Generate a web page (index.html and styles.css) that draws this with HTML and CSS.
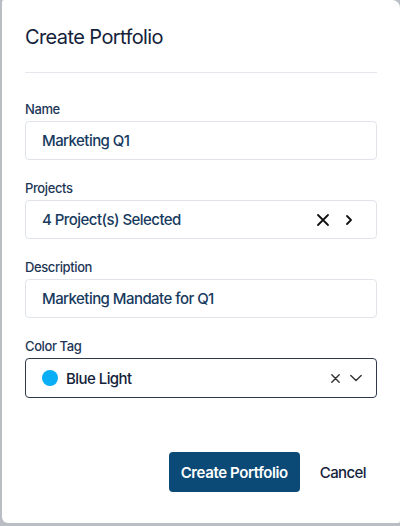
FILE: index.html
```html
<!DOCTYPE html>
<html>
<head>
<meta charset="utf-8">
<link rel="stylesheet" href="styles.css">
</head>
<body>
<div class="dialog">
  <h1 class="title">Create Portfolio</h1>
  <div class="divider"></div>
  <div class="field">
    <label class="label">Name</label>
    <div class="input">Marketing Q1</div>
  </div>
  <div class="field">
    <label class="label">Projects</label>
    <div class="input">
      <span class="value">4 Project(s) Selected</span>
      <span class="icons">
        <svg width="14" height="14" viewBox="0 0 14 14"><path d="M2 2L12 12M12 2L2 12" stroke="#111" stroke-width="1.8" stroke-linecap="round" fill="none"/></svg>
        <svg width="10" height="12" viewBox="0 0 10 12"><path d="M3 2L7 6L3 10" stroke="#111" stroke-width="1.8" stroke-linecap="round" stroke-linejoin="round" fill="none"/></svg>
      </span>
    </div>
  </div>
  <div class="field">
    <label class="label">Description</label>
    <div class="input">Marketing Mandate for Q1</div>
  </div>
  <div class="field">
    <label class="label">Color Tag</label>
    <div class="input select">
      <span class="dot"></span>
      <span class="value dark">Blue Light</span>
      <span class="icons small">
        <svg width="9" height="9" viewBox="0 0 9 9"><path d="M0.8 0.8L8.2 8.2M8.2 0.8L0.8 8.2" stroke="#333" stroke-width="1.4" stroke-linecap="round" fill="none"/></svg>
        <svg width="12" height="8" viewBox="0 0 12 8"><path d="M0.8 1.5L6 6.5L11.2 1.5" stroke="#333" stroke-width="1.4" stroke-linecap="round" stroke-linejoin="round" fill="none"/></svg>
      </span>
    </div>
  </div>
  <div class="actions">
    <button class="primary">Create Portfolio</button>
    <button class="link">Cancel</button>
  </div>
</div>
</body>
</html>
```
FILE: styles.css
```css
html, body {
  margin: 0;
  padding: 0;
}
body {
  background: #b9bec4;
  width: 400px;
  height: 526px;
  overflow: hidden;
  font-family: Inter, "Noto Sans", sans-serif;
}
.dialog {
  margin-left: 2px;
  height: 523px;
  background: #fff;
  border-radius: 2px 8px 2px 6px;
  padding: 23px 23px 0 23px;
  box-sizing: border-box;
  display: flex;
  flex-direction: column;
}
.title {
  margin: 0;
  font-size: 20px;
  line-height: 28px;
  font-weight: 400;
  color: #14223a;
  letter-spacing: -0.6px;
}
.divider {
  height: 1px;
  background: #e4e7eb;
  margin-top: 21px;
  margin-bottom: 28px;
}
.field {
  display: flex;
  flex-direction: column;
  margin-bottom: 20px;
}
.label {
  font-size: 13px;
  line-height: 16px;
  font-weight: 500;
  color: #1d3656;
  margin-bottom: 4px;
  letter-spacing: -0.4px;
}
.input {
  height: 39px;
  box-sizing: border-box;
  border: 1px solid #e0e4e9;
  border-radius: 4px;
  display: flex;
  align-items: center;
  padding: 0 16px;
  font-size: 15px;
  font-weight: 500;
  color: #173a5e;
  letter-spacing: -0.55px;
}
.value {
  flex: 1;
}
.value.dark {
  color: #14223a;
}
.icons {
  display: flex;
  align-items: center;
  gap: 14px;
  margin-right: 6px;
}
.icons.small {
  gap: 10px;
  margin-right: 0;
}
.select {
  height: 40px;
  border: 1px solid #2f3b4b;
  padding-right: 14px;
}
.dot {
  width: 16px;
  height: 16px;
  border-radius: 50%;
  background: #0aaef5;
  margin-right: 8px;
}
.actions {
  display: flex;
  justify-content: flex-end;
  align-items: center;
  margin-top: 34px;
  gap: 20px;
  padding-right: 11px;
}
button {
  font-family: inherit;
  cursor: pointer;
}
.primary {
  height: 40px;
  padding: 0 12px;
  background: #0b4a77;
  border: none;
  border-radius: 4px;
  color: #fff;
  font-size: 15px;
  font-weight: 600;
  letter-spacing: -0.4px;
}
.link {
  background: none;
  border: none;
  padding: 0;
  color: #14223a;
  font-size: 15px;
  font-weight: 500;
  letter-spacing: -0.6px;
}
```
